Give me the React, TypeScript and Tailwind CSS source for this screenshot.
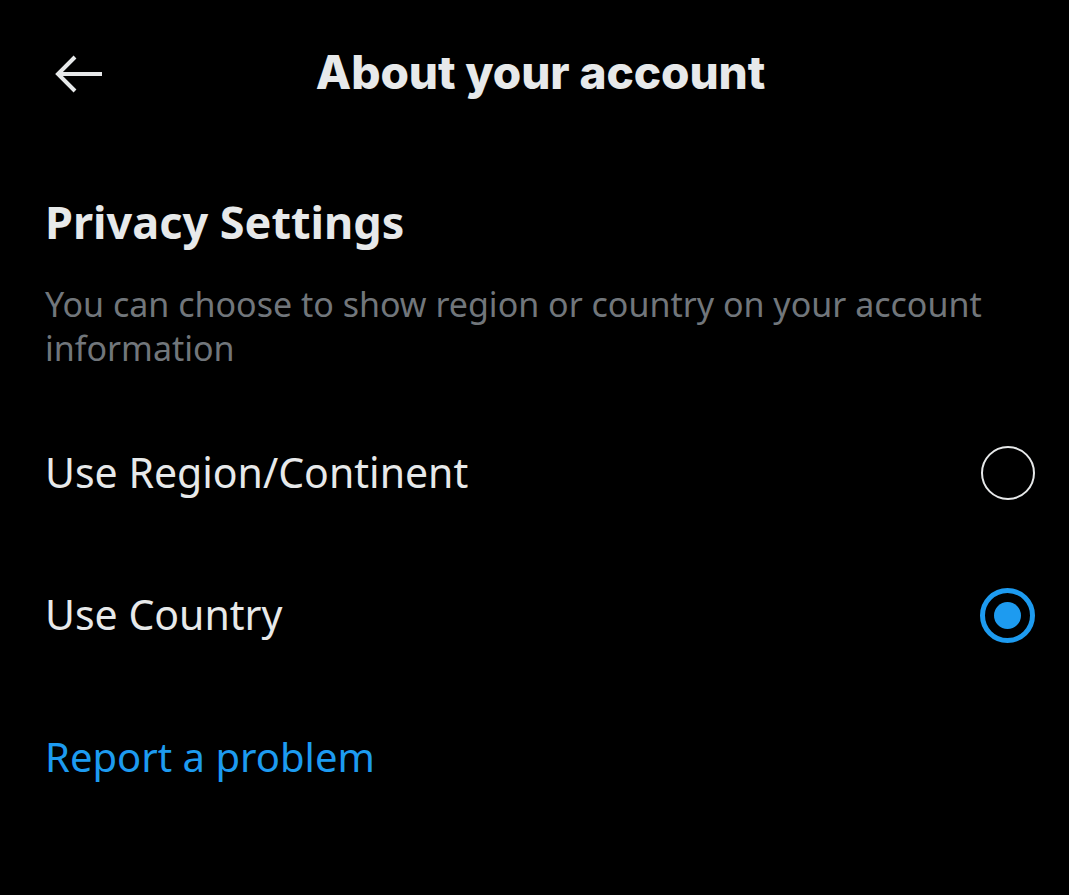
import React from "react";

const body = { fontFamily: '"Noto Sans", "Open Sans", sans-serif' };

const Radio: React.FC<{ checked?: boolean }> = ({ checked }) =>
  checked ? (
    <div className="w-[55px] h-[55px] rounded-full border-[5px] border-[#1d9bf0] grid place-items-center">
      <div className="w-[27px] h-[27px] rounded-full bg-[#1d9bf0]" />
    </div>
  ) : (
    <div className="w-[54px] h-[54px] rounded-full border-2 border-[#e7e9ea]" />
  );

const App: React.FC = () => {
  return (
    <div className="w-[1069px] h-[895px] bg-black text-[#e7e9ea] overflow-hidden" style={body}>
      <div className="relative h-[146px] flex items-start justify-center pt-[42px] pl-[12px]">
        <button className="absolute left-[52px] top-[52px] w-[54px] h-[44px] grid place-items-center">
          <svg width="50" height="42" viewBox="0 0 50 42" fill="none" stroke="#e7e9ea" strokeWidth="4">
            <path d="M48 21H5" />
            <path d="M21 4L4 21l17 17" />
          </svg>
        </button>
        <h1
          className="text-[46px] font-extrabold leading-[60px] tracking-[-0.1px]"
          style={{ fontFamily: "Inter, sans-serif" }}
        >
          About your account
        </h1>
      </div>

      <div className="pl-[45px] pr-[34px]">
        <h2 className="text-[45px] font-bold leading-[56px] mt-[48px]">Privacy Settings</h2>
        <p className="text-[34px] leading-[44px] text-[#71767b] mt-[32px]">
          You can choose to show region or country on your account information
        </p>

        <div className="flex items-center justify-between h-[142px] mt-[32px]">
          <span className="text-[41px]">Use Region/Continent</span>
          <Radio />
        </div>
        <div className="flex items-center justify-between h-[142px]">
          <span className="text-[41px]">Use Country</span>
          <Radio checked />
        </div>

        <a className="block text-[40px] text-[#1d9bf0] mt-[45px] leading-[52px]">Report a problem</a>
      </div>
    </div>
  );
};

export default App;
